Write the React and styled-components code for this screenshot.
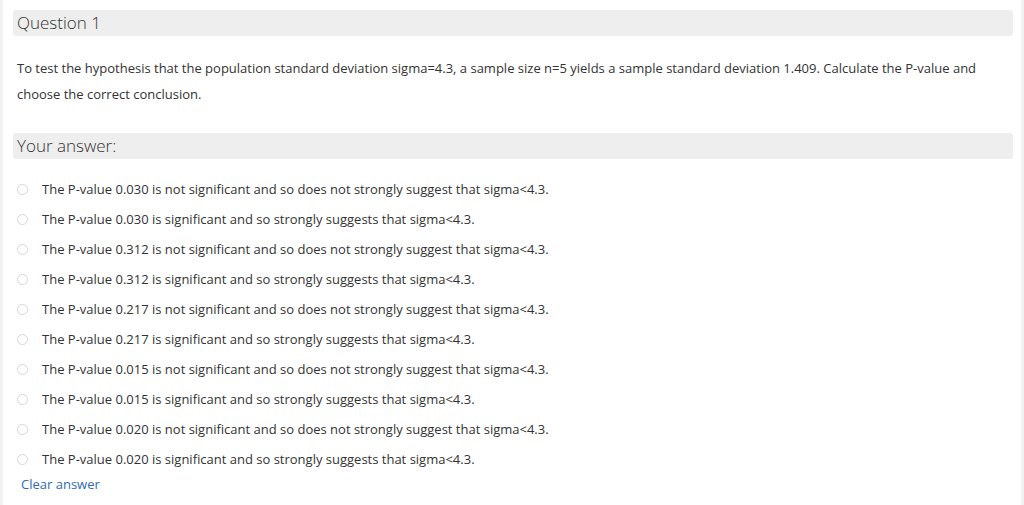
import React from 'react';
import styled, { createGlobalStyle } from 'styled-components';

const GlobalStyle = createGlobalStyle`
  html, body {
    margin: 0;
    padding: 0;
    background: #fff;
  }
  body {
    font-family: 'Open Sans', 'Noto Sans', sans-serif;
    color: #333;
  }
`;

const Page = styled.div`
  box-sizing: border-box;
  width: 1024px;
  height: 505px;
  overflow: hidden;
  border-left: 3px solid #f2f2f2;
  border-right: 3px solid #f2f2f2;
  padding: 10px 8px 0 10px;
`;

const SectionTitle = styled.div`
  box-sizing: border-box;
  height: 26px;
  background: #eeeeee;
  border-radius: 3px;
  padding-left: 4px;
  font-size: 17px;
  font-weight: 300;
  line-height: 26px;
  color: #333;
  margin-top: ${(props) => props.top || 0}px;
`;

const QuestionText = styled.p`
  margin: 19px 0 0 4px;
  font-size: 13px;
  line-height: 26px;
  color: #333;
`;

const Options = styled.div`
  display: flex;
  flex-direction: column;
  margin-top: 15px;
  padding-left: 4px;
`;

const Option = styled.label`
  display: flex;
  align-items: center;
  height: 30px;
  font-size: 13px;
  color: #333;
`;

const Radio = styled.span`
  box-sizing: border-box;
  width: 11px;
  height: 11px;
  border: 1px solid #d6d6d6;
  border-radius: 50%;
  background: #fff;
  margin-right: 14px;
  flex-shrink: 0;
`;

const ClearLink = styled.a`
  display: block;
  width: fit-content;
  margin: 0 0 0 8px;
  font-size: 13px;
  line-height: 20px;
  color: #2e6bb5;
  text-decoration: none;
`;

const answers = [
  ['0.030', false],
  ['0.030', true],
  ['0.312', false],
  ['0.312', true],
  ['0.217', false],
  ['0.217', true],
  ['0.015', false],
  ['0.015', true],
  ['0.020', false],
  ['0.020', true],
];

const App = () => (
  <>
    <GlobalStyle />
    <Page>
      <SectionTitle>Question 1</SectionTitle>
      <QuestionText>
        To test the hypothesis that the population standard deviation sigma=4.3, a sample size n=5 yields a sample standard deviation 1.409. Calculate the P-value and
        <br />
        choose the correct conclusion.
      </QuestionText>
      <SectionTitle top={26}>Your answer:</SectionTitle>
      <Options>
        {answers.map(([p, sig], i) => (
          <Option key={i}>
            <Radio />
            {sig
              ? `The P-value ${p} is significant and so strongly suggests that sigma<4.3.`
              : `The P-value ${p} is not significant and so does not strongly suggest that sigma<4.3.`}
          </Option>
        ))}
      </Options>
      <ClearLink href="#">Clear answer</ClearLink>
    </Page>
  </>
);

export default App;
